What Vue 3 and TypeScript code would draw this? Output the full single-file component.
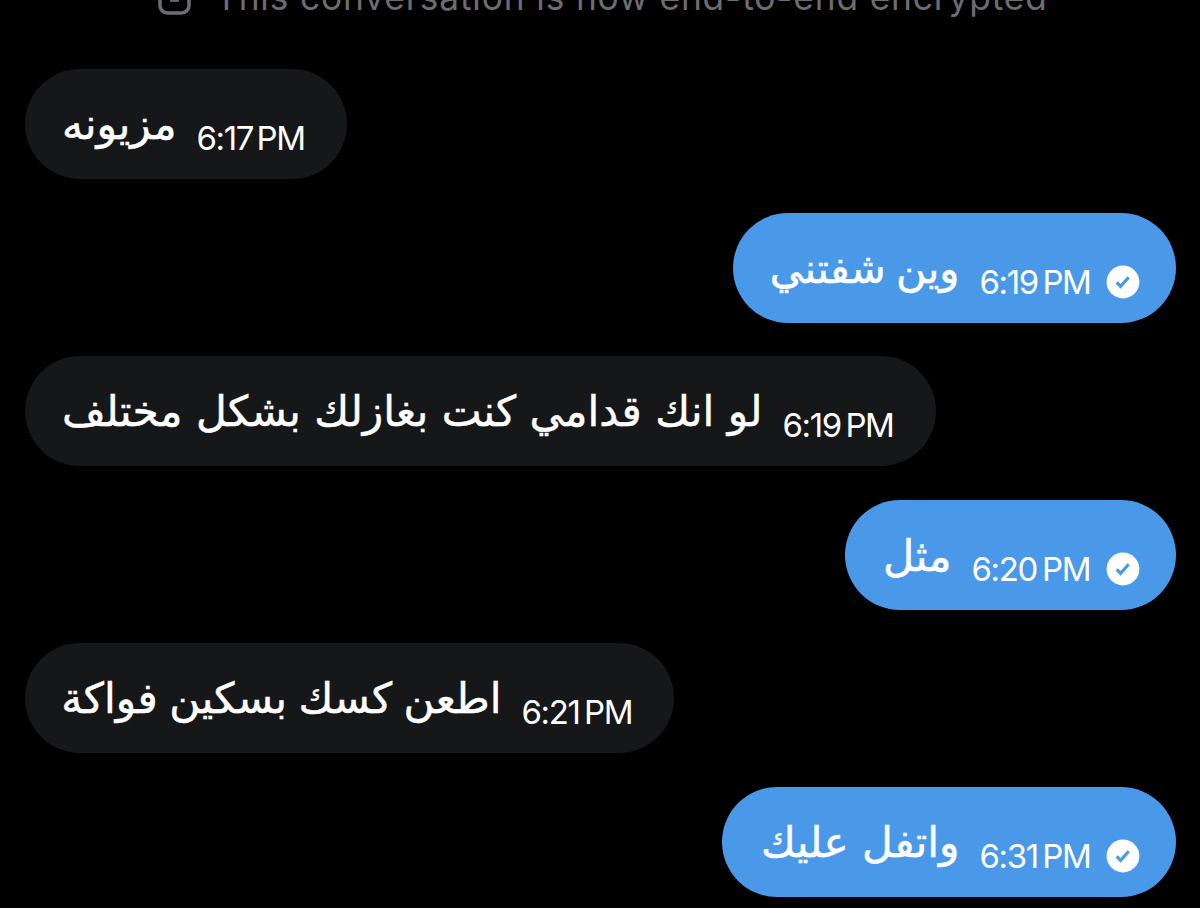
<script setup lang="ts">
interface Message {
  text: string
  time: string
  mine: boolean
  width: number
  textWidth: number
  fontSize: number
  gap: number
  timeGap: number
}

const messages: Message[] = [
  { text: 'مزيونه', time: '6:17 PM', mine: false, width: 322, textWidth: 113, fontSize: 42.5, gap: 0, timeGap: -4.5 },
  { text: 'وين شفتني', time: '6:19 PM', mine: true, width: 443, textWidth: 188, fontSize: 41.7, gap: -3, timeGap: -3.5 },
  { text: 'لو انك قدامي كنت بغازلك بشكل مختلف', time: '6:19 PM', mine: false, width: 911, textWidth: 699, fontSize: 42.3, gap: 0, timeGap: -3.5 },
  { text: 'مثل', time: '6:20 PM', mine: true, width: 331, textWidth: 68, fontSize: 43, gap: 0, timeGap: -3 },
  { text: 'اطعن كسك بسكين فواكة', time: '6:21 PM', mine: false, width: 649, textWidth: 438, fontSize: 42.3, gap: -2, timeGap: -3.5 },
  { text: 'واتفل عليك', time: '6:31 PM', mine: true, width: 454, textWidth: 199, fontSize: 42.3, gap: 0, timeGap: -3.5 },
]
</script>

<template>
  <main class="chat">
    <header class="notice">
      <svg class="lock" viewBox="0 0 34 40" aria-hidden="true">
        <path d="M9 13V8a8 8 0 0 1 16 0v5" />
        <rect x="2" y="11" width="29" height="26" rx="7.5" />
        <path d="M12 24h9" />
      </svg>
      <span>This conversation is now end-to-end encrypted</span>
    </header>
    <div
      v-for="(m, i) in messages"
      :key="i"
      class="bubble"
      :class="{ mine: m.mine }"
      :style="{ width: m.width + 'px' }"
    >
      <span
        class="text"
        dir="rtl"
        :style="{ width: m.textWidth + 'px', fontSize: m.fontSize + 'px', wordSpacing: m.gap + 'px' }"
      >{{ m.text }}</span>
      <span class="time" :style="{ wordSpacing: m.timeGap + 'px' }">{{ m.time }}</span>
      <svg v-if="m.mine" class="check" viewBox="0 0 34 34" aria-hidden="true">
        <circle cx="17" cy="17" r="16.4" />
        <path d="M10.7 17.3l3.9 4 8.1-9" />
      </svg>
    </div>
  </main>
</template>

<style>
body {
  margin: 0;
  background: #000;
}
</style>

<style scoped>
.chat {
  box-sizing: border-box;
  height: 908px;
  overflow: hidden;
  background: #000;
  padding: 0 24.5px;
  display: flex;
  flex-direction: column;
  font-family: Inter, 'Noto Sans', 'DejaVu Sans', sans-serif;
}
.notice {
  height: 69px;
  flex: none;
  display: flex;
  align-items: flex-start;
  padding-left: 133.5px;
  color: #6c6d71;
  font-size: 35.3px;
  line-height: 40px;
  letter-spacing: 0.85px;
  white-space: nowrap;
}
.notice span {
  margin: -22px 0 0 23px;
}
.lock {
  width: 34px;
  height: 40px;
  margin: -24px 0 0 0;
}
.lock path,
.lock rect {
  fill: none;
  stroke: #6c6d71;
  stroke-width: 3.6;
}
.bubble {
  box-sizing: border-box;
  flex: none;
  height: 110px;
  margin-bottom: 33.6px;
  border-radius: 55px;
  background: #161719;
  color: #fff;
  padding: 0 36px 0 39px;
  display: flex;
  align-items: flex-start;
  white-space: nowrap;
}
.mine {
  align-self: flex-end;
  background: #4a99e9;
}
.text {
  flex: none;
  font-family: 'DejaVu Sans', sans-serif;
  line-height: 112px;
  -webkit-text-stroke: 0.5px #fff;
}
.time {
  margin: 49px 0 0 20px;
  font-size: 33px;
  line-height: 40px;
  letter-spacing: -1.35px;
}
.check {
  flex: none;
  width: 34px;
  height: 34px;
  margin: 52px 0 0 auto;
}
.check circle {
  fill: #fff;
}
.check path {
  fill: none;
  stroke: #4a99e9;
  stroke-width: 3.2;
}
</style>
